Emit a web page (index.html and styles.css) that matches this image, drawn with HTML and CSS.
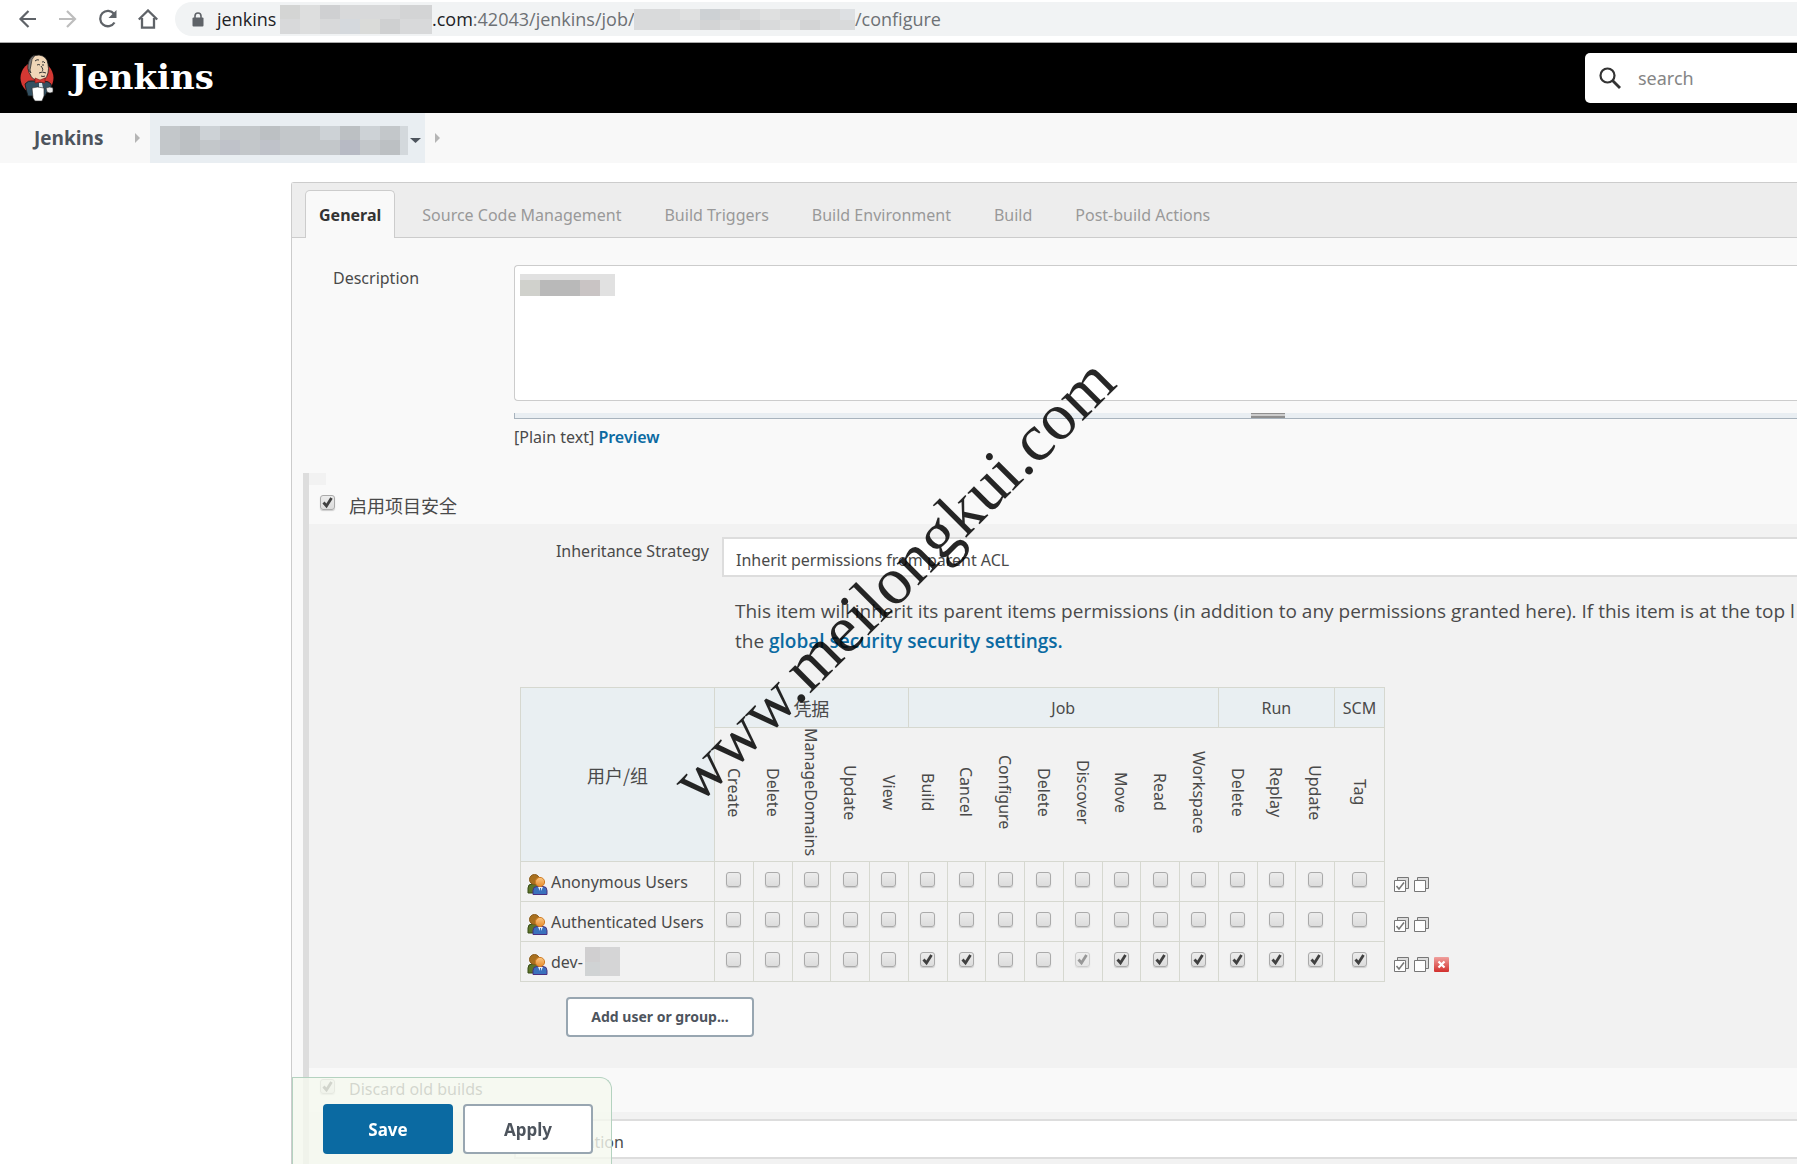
FILE: index.html
```html
<!DOCTYPE html>
<html lang="en">
<head>
<meta charset="utf-8">
<title>Config [Jenkins]</title>
<link rel="stylesheet" href="styles.css">
</head>
<body>
<svg class="defs" width="0" height="0" aria-hidden="true">
  <defs>
    <linearGradient id="skin" x1="0" y1="0" x2="0" y2="1"><stop offset="0" stop-color="#fbc985"/><stop offset="1" stop-color="#e58a2c"/></linearGradient>
    <linearGradient id="red" x1="0" y1="0" x2="0" y2="1"><stop offset="0" stop-color="#f0a09d"/><stop offset="1" stop-color="#d22f2c"/></linearGradient>
    <symbol id="users" viewBox="0 0 21 21">
      <path d="M1 19v-5q0-4 4-4h4q3 0 3 4v5z" fill="#5d7529" stroke="#374a14"/>
      <circle cx="7.500" cy="5.500" r="5" fill="#a9701f" stroke="#8a5a18"/>
      <path d="M6 20.500v-4q0-4 4-4h6q4 0 4 4v4z" fill="#3b71bd" stroke="#4a2f80"/>
      <path d="M11 13h5l-2.500 5z" fill="#e6eefb"/>
      <path d="M13 14h1v4h-1z" fill="#3b71bd"/>
      <circle cx="13" cy="8" r="4.600" fill="url(#skin)" stroke="#d17d24"/>
    </symbol>
    <symbol id="all" viewBox="0 0 15 15">
      <path d="M3.500 3V.5h11v11H12" fill="#ddd" stroke="#777"/><path d="M.5 3.500h11v11H.5z" fill="#fff" stroke="#777"/>
      <path d="M2.500 9l2.500 3 5-6.500" fill="none" stroke="#777" stroke-width="1.500"/>
    </symbol>
    <symbol id="none" viewBox="0 0 15 15">
      <path d="M3.500 3V.5h11v11H12" fill="#ddd" stroke="#777"/><path d="M.5 3.500h11v11H.5z" fill="#fff" stroke="#777"/>
    </symbol>
    <symbol id="remove" viewBox="0 0 15 15">
      <rect width="15" height="15" rx="1" fill="url(#red)"/><path d="M4.500 4.500l6 6m0-6l-6 6" stroke="#fff" stroke-width="2.200"/>
    </symbol>
  </defs>
</svg>

<div class="browser">
  <nav class="browser-nav" aria-label="Browser">
    <button class="nav-btn" aria-label="Back"><svg width="20" height="20" viewBox="0 0 20 20"><path d="M18 10H3M10.500 2L2.500 10l8 8" fill="none" stroke="#5f6368" stroke-width="2.200"/></svg></button>
    <button class="nav-btn" aria-label="Forward"><svg width="20" height="20" viewBox="0 0 20 20"><path d="M1 10h15M9 2l8 8-8 8" fill="none" stroke="#bdbdbd" stroke-width="2.200"/></svg></button>
    <button class="nav-btn" aria-label="Reload"><svg width="20" height="20" viewBox="0 0 20 20"><path d="M16.500 13.500A7.700 7.700 0 1 1 16 4.800" fill="none" stroke="#5f6368" stroke-width="2.300"/><path d="M18.500 1v8h-8z" fill="#5f6368"/></svg></button>
    <button class="nav-btn" aria-label="Home"><svg width="20" height="20" viewBox="0 0 20 20"><path d="M.8 10.500L10 1.500l9.200 9M4 9v9.700h12V9" fill="none" stroke="#5f6368" stroke-width="2.300"/></svg></button>
  </nav>
  <div class="address">
    <svg class="lock" width="12" height="15" viewBox="0 0 12 15"><rect x=".5" y="5.500" width="11" height="9" rx="1" fill="#5f6368"/><path d="M3 6V4a3 3 0 0 1 6 0v2" fill="none" stroke="#5f6368" stroke-width="1.600"/></svg>
    <span class="host host-name">jenkins</span>
    <svg class="mosaic" width="152" height="29" shape-rendering="crispEdges"><rect width="152" height="29" fill="#d8d9da"/><path fill="#d4d5d4" d="M0 0h20v14H0z"/><path fill="#dddede" d="M20 0h20v29H20z"/><path fill="#cfd0d2" d="M40 0h20v14H40z"/><path fill="#d5d9dd" d="M60 14h20v15H60z"/><path fill="#dadbd9" d="M80 14h20v15H80z"/><path fill="#cfd0d1" d="M100 14h20v15h-20z"/><path fill="#d3d4d5" d="M120 0h32v14h-32z"/></svg>
    <span class="host domain">.com<span class="path">:42043/jenkins/job/</span></span>
    <svg class="mosaic" width="221" height="21" shape-rendering="crispEdges"><rect width="221" height="21" fill="#d9dadb"/><path fill="#dfe0e0" d="M46 0h20v11H46zM126 0h20v11h-20zM146 11h20v10h-20z"/><path fill="#cdd1d4" d="M66 0h20v11H66z"/><path fill="#d3d4d5" d="M86 0h20v11H86zM66 11h20v10H66zM106 11h20v10h-20zM166 11h20v10h-20z"/><path fill="#dde0e3" d="M206 0h15v11h-15z"/></svg>
    <span class="host path">/configure</span>
  </div>
</div>

<header class="header">
  <a class="logo" href="#">
    <svg width="34" height="48" viewBox="0 0 34 48">
      <circle cx="17" cy="24" r="16.500" fill="#d33833"/>
      <path d="M5 30q3-4 8-3l10 0q6 0 8 3l1 6-5 2-2 4H8q-2-6-3-12z" fill="#335061" stroke="#111" stroke-width=".8"/>
      <path d="M9 8Q11 1 19 1q8 1 9 9 1 5 0 9-2 8-9 8-7-1-9-7-3-3-1-12z" fill="#f0d6b7" stroke="#222" stroke-width=".8"/>
      <path d="M9 7q2-5 6-6-4 4-4 10l-1 5 1 3q-5-3-2-12z" fill="#7d7b7c" stroke="#222" stroke-width=".7"/>
      <path d="M15 7q2-2 4-1M22 8q2-1 3 1M17 11q2-1 3 0M22 11l2 0M21 12q3 4 1 5M19 19q3-2 7 0M21 22q2 1 4 0" fill="none" stroke="#333" stroke-width="1"/>
      <path d="M15 24l5 2 5-2 0 5-5-1-5 1z" fill="#d33833" stroke="#7a1512" stroke-width=".6"/>
      <path d="M19 29l3 0 1 5-4 0z" fill="#d9e4ea"/>
      <path d="M12 34q5-2 12 0l0 8-2 5h-7l-2-3z" fill="#fff" stroke="#222" stroke-width=".6"/>
      <path d="M26 34q4-2 7 0l0 4q-3 2-6 0z" fill="#e9e9e9" stroke="#222" stroke-width=".6"/>
    </svg>
    <span>Jenkins</span>
  </a>
  <label class="search">
    <svg width="22" height="22" viewBox="0 0 22 22"><circle cx="8.500" cy="8.500" r="7" fill="none" stroke="#333" stroke-width="2.200"/><path d="M13.500 13.500l7.500 7.500" stroke="#333" stroke-width="2.800"/></svg>
    <input type="text" placeholder="search" aria-label="search">
  </label>
</header>

<nav class="crumbs" aria-label="Breadcrumb">
  <a class="crumb-home" href="#">Jenkins</a>
  <svg class="sep" width="5" height="10"><path d="M0 0l5 5-5 5z" fill="#b5b5b5"/></svg>
  <a class="crumb-job" href="#" aria-label="Job">
    <svg width="248" height="29" shape-rendering="crispEdges"><rect width="248" height="29" fill="#c3c7ca"/><path fill="#bcc0c3" d="M20 0h20v14H20zM100 0h20v14h-20zM180 0h20v14h-20zM20 14h20v15H20zM220 14h20v15h-20z"/><path fill="#cdd2d6" d="M40 0h20v14H40zM160 0h20v14h-20zM200 0h20v14h-20z"/><path fill="#bfc2c9" d="M60 14h20v15H60zM100 14h20v15h-20z"/><path fill="#b7bac4" d="M180 14h20v15h-20z"/><path fill="#d3d8dc" d="M240 0h8v29h-8z"/></svg>
    <svg width="11" height="5"><path d="M0 0h11L5.500 5z" fill="#4d545d"/></svg>
  </a>
  <svg class="sep-end" width="5" height="10"><path d="M0 0l5 5-5 5z" fill="#b5b5b5"/></svg>
</nav>

<main class="config">
  <nav class="tabs" aria-label="Sections">
    <a class="tab active" href="#">General</a>
    <a class="tab" href="#">Source Code Management</a>
    <a class="tab" href="#">Build Triggers</a>
    <a class="tab" href="#">Build Environment</a>
    <a class="tab" href="#">Build</a>
    <a class="tab" href="#">Post-build Actions</a>
  </nav>

  <div class="description">
    <label for="description">Description</label>
    <div class="editor">
      <textarea id="description"></textarea>
      <svg class="redacted" width="95" height="22" shape-rendering="crispEdges"><path fill="#e1e1e1" d="M0 0h95v22H0z"/><path fill="#d0d1cc" d="M0 6h20v16H0z"/><path fill="#b9b9b9" d="M20 6h40v16H20z"/><path fill="#c9c4c4" d="M60 6h20v16H60z"/></svg>
      <div class="resize"><i></i></div>
      <p class="format">[Plain text] <a href="#">Preview</a></p>
    </div>
  </div>

  <section class="options">
    <div class="option first">
      <input type="checkbox" id="secure" checked><label for="secure" class="cjk">启用项目安全</label>
    </div>
    <div class="nested">
      <div class="strategy">
        <label for="strategy">Inheritance Strategy</label>
        <select id="strategy" class="field"><option>Inherit permissions from parent ACL</option></select>
      </div>
      <p class="help">This item will inherit its parent items permissions (in addition to any permissions granted here). If this item is at the top l<br>the <a href="#">global security security settings</a><b>.</b></p>
      <table class="matrix">
        <colgroup><col class="c-name"><col span="16" class="c-perm"><col class="c-scm"><col class="c-tools"></colgroup>
        <thead>
          <tr class="groups"><th rowspan="2" class="cjk">用户/组</th><th colspan="5" class="cjk">凭据</th><th colspan="8">Job</th><th colspan="3">Run</th><th>SCM</th><td class="tools"></td></tr>
          <tr class="perms"><th><span>Create</span></th><th><span>Delete</span></th><th><span>ManageDomains</span></th><th><span>Update</span></th><th><span>View</span></th><th><span>Build</span></th><th><span>Cancel</span></th><th><span>Configure</span></th><th><span>Delete</span></th><th><span>Discover</span></th><th><span>Move</span></th><th><span>Read</span></th><th><span>Workspace</span></th><th><span>Delete</span></th><th><span>Replay</span></th><th><span>Update</span></th><th><span>Tag</span></th><td class="tools"></td></tr>
        </thead>
        <tbody>
          <tr><td class="who"><div><svg class="users" width="21" height="21"><use href="#users"/></svg>Anonymous Users</div></td>
            <td><input type="checkbox" aria-label="Create"></td><td><input type="checkbox" aria-label="Delete"></td><td><input type="checkbox" aria-label="ManageDomains"></td><td><input type="checkbox" aria-label="Update"></td><td><input type="checkbox" aria-label="View"></td>
            <td><input type="checkbox" aria-label="Build"></td><td><input type="checkbox" aria-label="Cancel"></td><td><input type="checkbox" aria-label="Configure"></td><td><input type="checkbox" aria-label="Delete"></td><td><input type="checkbox" aria-label="Discover"></td><td><input type="checkbox" aria-label="Move"></td><td><input type="checkbox" aria-label="Read"></td><td><input type="checkbox" aria-label="Workspace"></td>
            <td><input type="checkbox" aria-label="Delete"></td><td><input type="checkbox" aria-label="Replay"></td><td><input type="checkbox" aria-label="Update"></td><td><input type="checkbox" aria-label="Tag"></td>
            <td class="tools"><div><button aria-label="Select all"><svg width="15" height="15"><use href="#all"/></svg></button><button aria-label="Unselect all"><svg width="15" height="15"><use href="#none"/></svg></button></div></td></tr>
          <tr><td class="who"><div><svg class="users" width="21" height="21"><use href="#users"/></svg>Authenticated Users</div></td>
            <td><input type="checkbox" aria-label="Create"></td><td><input type="checkbox" aria-label="Delete"></td><td><input type="checkbox" aria-label="ManageDomains"></td><td><input type="checkbox" aria-label="Update"></td><td><input type="checkbox" aria-label="View"></td>
            <td><input type="checkbox" aria-label="Build"></td><td><input type="checkbox" aria-label="Cancel"></td><td><input type="checkbox" aria-label="Configure"></td><td><input type="checkbox" aria-label="Delete"></td><td><input type="checkbox" aria-label="Discover"></td><td><input type="checkbox" aria-label="Move"></td><td><input type="checkbox" aria-label="Read"></td><td><input type="checkbox" aria-label="Workspace"></td>
            <td><input type="checkbox" aria-label="Delete"></td><td><input type="checkbox" aria-label="Replay"></td><td><input type="checkbox" aria-label="Update"></td><td><input type="checkbox" aria-label="Tag"></td>
            <td class="tools"><div><button aria-label="Select all"><svg width="15" height="15"><use href="#all"/></svg></button><button aria-label="Unselect all"><svg width="15" height="15"><use href="#none"/></svg></button></div></td></tr>
          <tr><td class="who"><div><svg class="users" width="21" height="21"><use href="#users"/></svg>dev-<svg class="mosaic" width="35" height="29" shape-rendering="crispEdges"><path fill="#d5d5d6" d="M0 0h35v29H0z"/><path fill="#d0cfd0" d="M0 0h15v15H0z"/><path fill="#d0d3d4" d="M0 15h15v14H0z"/></svg></div></td>
            <td><input type="checkbox" aria-label="Create"></td><td><input type="checkbox" aria-label="Delete"></td><td><input type="checkbox" aria-label="ManageDomains"></td><td><input type="checkbox" aria-label="Update"></td><td><input type="checkbox" aria-label="View"></td>
            <td><input type="checkbox" checked aria-label="Build"></td><td><input type="checkbox" checked aria-label="Cancel"></td><td><input type="checkbox" aria-label="Configure"></td><td><input type="checkbox" aria-label="Delete"></td><td><input type="checkbox" checked disabled aria-label="Discover"></td><td><input type="checkbox" checked aria-label="Move"></td><td><input type="checkbox" checked aria-label="Read"></td><td><input type="checkbox" checked aria-label="Workspace"></td>
            <td><input type="checkbox" checked aria-label="Delete"></td><td><input type="checkbox" checked aria-label="Replay"></td><td><input type="checkbox" checked aria-label="Update"></td><td><input type="checkbox" checked aria-label="Tag"></td>
            <td class="tools"><div><button aria-label="Select all"><svg width="15" height="15"><use href="#all"/></svg></button><button aria-label="Unselect all"><svg width="15" height="15"><use href="#none"/></svg></button><button aria-label="Remove"><svg width="15" height="15"><use href="#remove"/></svg></button></div></td></tr>
        </tbody>
      </table>
      <button class="add">Add user or group...</button>
    </div>
    <div class="option second">
      <input type="checkbox" id="discard" checked><label for="discard">Discard old builds</label>
    </div>
    <div class="nested rotation">
      <select class="field" aria-label="Strategy"><option>Log Rotation</option></select>
    </div>
  </section>
</main>

<div class="actions">
  <button class="save">Save</button>
  <button class="apply">Apply</button>
</div>

<div class="watermark"><span>www.meilongkui.com</span></div>
</body>
</html>
```
FILE: styles.css
```css
* { box-sizing: border-box; }

body {
  margin: 0;
  min-height: 100vh;
  display: flex;
  flex-direction: column;
  overflow-x: hidden;
  background: #fff;
  color: #4a4a4a;
  font: 16px/24px "Noto Sans", "Noto Sans CJK SC", sans-serif;
}

.defs { position: absolute; }
svg { display: block; flex: none; }
a { color: #0b6aa2; font-weight: 600; text-decoration: none; }
button, input, select, textarea { font: inherit; color: inherit; margin: 0; }
.cjk { font-family: "Noto Sans CJK SC", sans-serif; font-size: 18px; }

/* Browser toolbar */
.browser {
  display: flex;
  align-items: flex-start;
  height: 43px;
  padding-top: 2px;
  border-bottom: 1px solid #a9a9a9;
}
.browser-nav { display: flex; gap: 20px; padding: 7px 17px 0 18px; }
.nav-btn { width: 20px; height: 20px; padding: 0; border: 0; background: none; }
.address {
  flex: 1;
  display: flex;
  align-items: center;
  height: 34px;
  padding-left: 17px;
  border-radius: 17px 0 0 17px;
  background: #f1f3f4;
  font-family: "Open Sans", sans-serif;
  font-size: 18px;
  color: #202124;
}
.lock { margin-right: 13px; }
.host { white-space: nowrap; }
.host-name { width: 63px; }
.domain { width: 202px; }
.path { color: #6d7175; }

/* Jenkins header */
.header {
  display: flex;
  justify-content: space-between;
  align-items: center;
  height: 70px;
  padding-left: 20px;
  background: #000;
}
.logo {
  display: flex;
  align-items: center;
  gap: 17px;
  color: #fff;
  font: bold 34px/46px "DejaVu Serif", serif;
}
.logo span { padding-bottom: 2px; }
.search {
  display: flex;
  align-items: center;
  width: 212px;
  height: 50px;
  padding-left: 14px;
  border-radius: 5px 0 0 5px;
  background: #fff;
}
.search input {
  width: 100%;
  padding: 0 0 0 17px;
  border: 0;
  outline: 0;
  background: none;
  font-size: 18px;
}
.search input::placeholder { color: #858585; opacity: 1; }

.crumbs {
  display: flex;
  align-items: center;
  height: 50px;
  padding-left: 34px;
  background: #f8f8f8;
}
.crumb-home { width: 101px; color: #4d545d; font: 700 19px/24px "Open Sans", sans-serif; }
.sep { margin-right: 10px; }
.crumb-job {
  display: flex;
  align-items: center;
  gap: 2px;
  height: 50px;
  padding: 4px 4px 0 10px;
  background: #e9eef2;
}
.sep-end { margin-left: 10px; }

/* Configuration panel */
.config {
  flex: 1;
  display: flex;
  flex-direction: column;
  margin: 19px 0 0 291px;
  border: 1px solid #ccc;
  border-width: 1px 0 0 1px;
  border-radius: 3px 0 0 0;
  background: #f9f9f9;
}
.tabs {
  display: flex;
  gap: 11px;
  height: 55px;
  padding: 7px 0 0 13px;
  border-bottom: 1px solid #ccc;
  background: #ededed;
}
.tab {
  padding: 13px 16px;
  color: #999;
  font-weight: 400;
  white-space: nowrap;
}
.tab.active {
  height: 48px;
  padding: 12px 13px;
  border: 1px solid #ccc;
  border-bottom: 0;
  border-radius: 5px 5px 0 0;
  background: #f9f9f9;
  color: #333;
  font-weight: 700;
}

.description {
  display: grid;
  grid-template-columns: 181px 1fr;
  padding: 27px 0 24px 41px;
}
.description label { padding-top: 1px; }
.editor { position: relative; }
.editor textarea {
  display: block;
  width: 100%;
  height: 136px;
  border: 1px solid #ccc;
  border-right: 0;
  border-radius: 4px 0 0 4px;
  background: #fff;
  resize: none;
}
.redacted { position: absolute; left: 6px; top: 9px; }
.resize {
  height: 6px;
  margin-top: 12px;
  border: 1px solid #a8b3bd;
  border-width: 0 0 1px 1px;
  background: #e9eef2;
}
.resize i {
  display: block;
  width: 34px;
  height: 5px;
  margin-left: 736px;
  border: 1px solid #8f8f8f;
  border-width: 1px 0 2px;
  background: #ccc;
}
.format { margin: 6px 0 0; }

/* Optional blocks */
.options {
  flex: 1;
  display: flex;
  flex-direction: column;
  margin-left: 11px;
  border-left: 6px solid #ddd;
}
.option { display: flex; align-items: flex-start; gap: 14px; padding-left: 11px; }
.option.first {
  height: 51px;
  padding-top: 20px;
  background: linear-gradient(#f2f2f2, #f2f2f2) no-repeat 0 0 / 17px 12px;
}
.option.second { height: 44px; padding-top: 9px; }
.option input { margin-top: 2px; }

input[type="checkbox"] {
  appearance: none;
  width: 15px;
  height: 15px;
  border: 1px solid #aaa;
  border-radius: 3px;
  background: linear-gradient(#ececec, #dcdcdc);
  box-shadow: 0 1px 1px #ccc;
}
input[type="checkbox"]:checked {
  background: url("data:image/svg+xml,%3Csvg xmlns='http://www.w3.org/2000/svg' viewBox='0 0 13 13'%3E%3Cpath d='M2.500 6.500l3 3.500 5-8' fill='none' stroke='%23404040' stroke-width='2.800'/%3E%3C/svg%3E") center / 13px 13px, linear-gradient(#ececec, #dcdcdc);
}
input[type="checkbox"]:disabled { opacity: .5; }

.nested { padding-top: 13px; background: #f2f2f2; }
.strategy { display: grid; grid-template-columns: 400px 1fr; column-gap: 13px; }
.strategy label { padding-top: 2px; text-align: right; }
.field {
  display: block;
  appearance: none;
  width: 100%;
  height: 40px;
  padding: 6px 12px 0;
  border: 2px solid #ddd;
  border-right: 0;
  border-radius: 0;
  background: #fff;
}
.help {
  margin: 19px 0 31px 426px;
  white-space: nowrap;
  font: 19px/30px "Open Sans", sans-serif;
}
.help b { color: #0b6aa2; font-weight: 600; }

.matrix {
  width: 941px;
  margin-left: 211px;
  table-layout: fixed;
  border-collapse: collapse;
}
.c-name { width: 194px; }
.c-scm { width: 50px; }
.c-tools { width: 76px; }
.matrix th, .matrix td {
  padding: 0;
  border: 1px solid #d6d8d0;
  font-weight: 400;
  text-align: center;
}
.matrix .tools { border: 0; }
.groups { height: 40px; }
.groups th { background: #e9eff2; }
.perms { height: 130px; }
.matrix .perms th { border-left-color: transparent; border-right-color: transparent; }
.matrix .perms th:last-of-type { border-right-color: #d6d8d0; }
.perms span { display: block; margin: 0 auto; padding-bottom: 5px; writing-mode: vertical-rl; line-height: 24px; }
.matrix tbody tr { height: 40px; }
.matrix input { display: block; margin: -4px auto 0; }
.who div { display: flex; align-items: center; gap: 3px; height: 39px; padding-left: 6px; white-space: nowrap; }
.who .users { margin-top: 6px; }
.who .mosaic { margin-left: -1px; }
.tools div { display: flex; gap: 5px; padding: 6px 0 0 9px; }
.tools button { width: 15px; height: 15px; padding: 0; border: 0; background: none; }

.add, .apply {
  border: 2px solid #98a6b1;
  border-radius: 4px;
  background: #fff;
  color: #4d545d;
  font-weight: 700;
}
.add {
  display: block;
  width: 188px;
  height: 40px;
  margin: 15px 0 31px 257px;
  padding: 0;
  font-size: 14px;
}
.rotation { flex: 1; padding: 7px 0 8px 205px; }

/* Sticky buttons */
.actions {
  position: fixed;
  left: 292px;
  bottom: 0;
  display: flex;
  gap: 10px;
  height: 87px;
  padding: 26px 18px 0 30px;
  border: 1px solid #b4d2c0;
  border-bottom: 0;
  border-radius: 0 12px 0 0;
  background: rgba(245, 249, 239, .8);
}
.save, .apply { width: 130px; height: 50px; padding: 1px 0 0; font-size: 17px; font-weight: 700; }
.save { border: 0; border-radius: 4px; background: #0b6aa2; color: #fff; }

.watermark {
  position: fixed;
  inset: 0;
  display: flex;
  align-items: center;
  justify-content: center;
  padding: 0 12px 6px 0;
  overflow: hidden;
  pointer-events: none;
}
.watermark span {
  color: rgba(0, 0, 0, .85);
  font: 67px/67px "Liberation Serif", serif;
  white-space: nowrap;
  transform: rotate(-45deg);
}
```
